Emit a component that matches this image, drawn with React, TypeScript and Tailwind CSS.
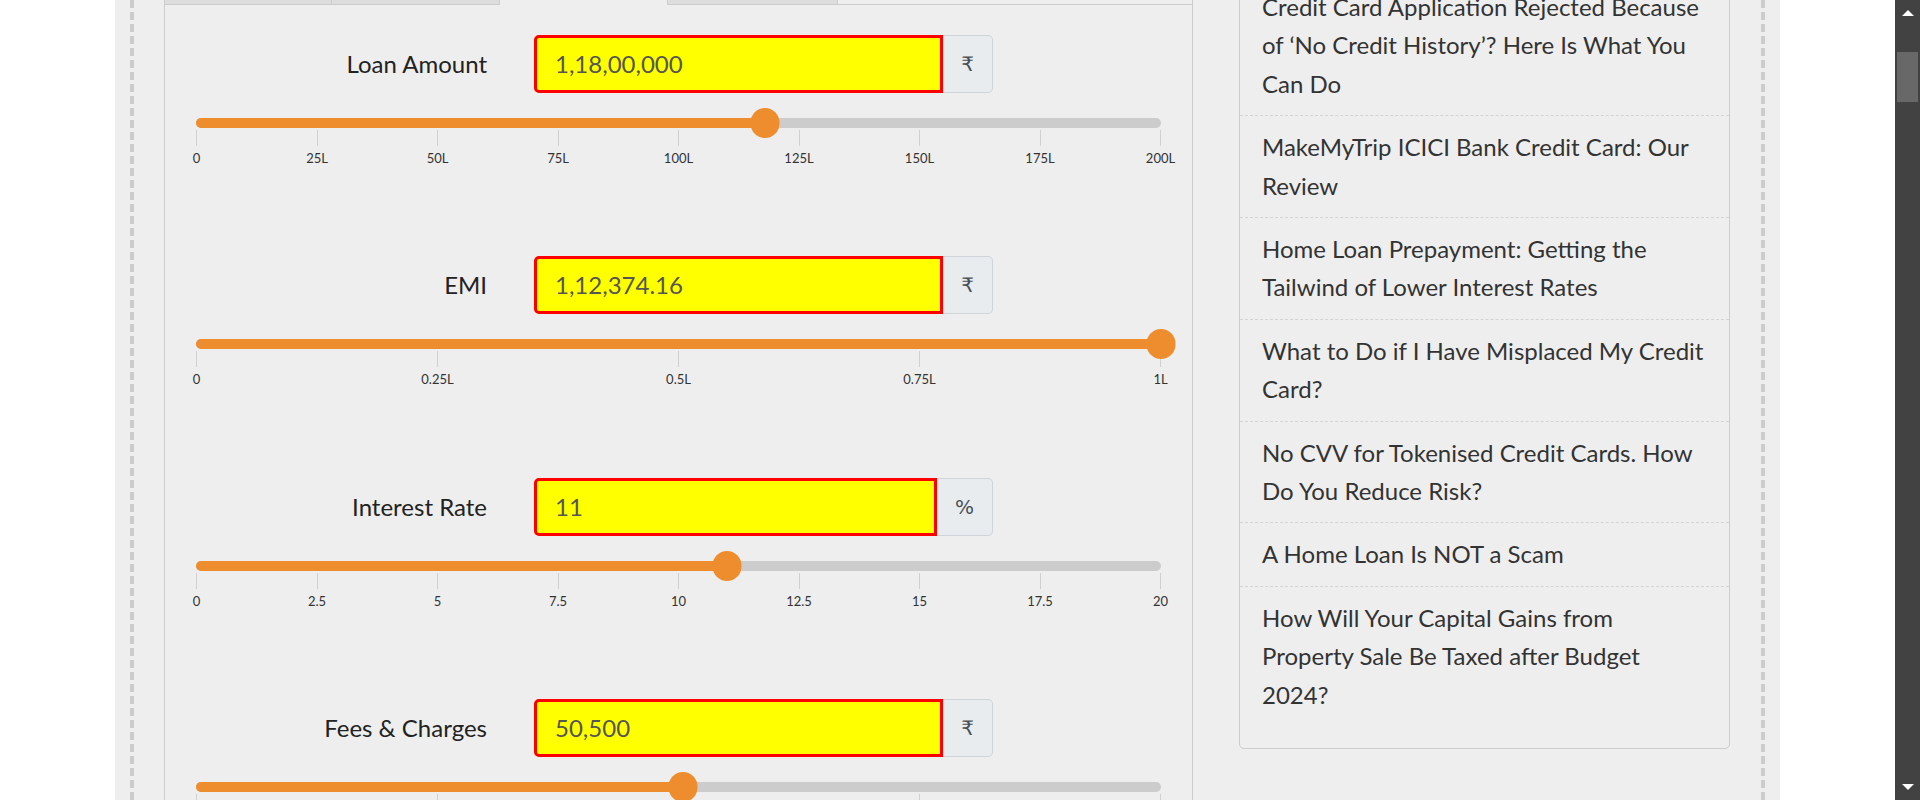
type Section = {
  label: string;
  value: string;
  unit: string;
  unitW: string;
  pct: number;
  ticks: string[];
  hideLabels?: boolean;
};

const sections: Section[] = [
  {
    label: "Loan Amount",
    value: "1,18,00,000",
    unit: "₹",
    unitW: "w-[50px]",
    pct: 59,
    ticks: ["0", "25L", "50L", "75L", "100L", "125L", "150L", "175L", "200L"],
  },
  {
    label: "EMI",
    value: "1,12,374.16",
    unit: "₹",
    unitW: "w-[50px]",
    pct: 100,
    ticks: ["0", "0.25L", "0.5L", "0.75L", "1L"],
  },
  {
    label: "Interest Rate",
    value: "11",
    unit: "%",
    unitW: "w-[56px]",
    pct: 55,
    ticks: ["0", "2.5", "5", "7.5", "10", "12.5", "15", "17.5", "20"],
  },
  {
    label: "Fees & Charges",
    value: "50,500",
    unit: "₹",
    unitW: "w-[50px]",
    pct: 50.5,
    ticks: ["0", "25K", "50K", "75K", "1L"],
    // labels fall below the fold
    hideLabels: true,
  },
];

const articles = [
  "Credit Card Application Rejected Because of ‘No Credit History’? Here Is What You Can Do",
  "MakeMyTrip ICICI Bank Credit Card: Our Review",
  "Home Loan Prepayment: Getting the Tailwind of Lower Interest Rates",
  "What to Do if I Have Misplaced My Credit Card?",
  "No CVV for Tokenised Credit Cards. How Do You Reduce Risk?",
  "A Home Loan Is NOT a Scam",
  "How Will Your Capital Gains from Property Sale Be Taxed after Budget 2024?",
];

function CalcSection({ s }: { s: Section }) {
  return (
    <div className="h-[221.3px]">
      <div className="flex h-[58px] items-center">
        <label className="w-[291px] text-right text-[24px] text-[#222]">{s.label}</label>
        <div className="ml-[47px] flex h-[58px] w-[459px]">
          <div className="flex flex-1 items-center rounded-l-[5px] border-[3px] border-[#ff0000] bg-[#ffff00] px-[18px] text-[24px] text-[#555]">
            {s.value}
          </div>
          <div
            className={
              "flex items-center justify-center rounded-r-[5px] border border-l-0 border-[#ced4da] bg-[#e9ecef] text-[22px] text-[#495057] " +
              s.unitW
            }
          >
            <span className="font-['DejaVu_Sans','Noto_Sans',sans-serif] text-[20px]">{s.unit}</span>
          </div>
        </div>
      </div>

      <div className="relative mt-[25px] h-[10px] rounded-full bg-[#cccccc]">
        <div className="h-full rounded-full bg-[#ee8d2d]" style={{ width: s.pct + "%" }} />
        <div
          className="absolute top-1/2 h-[30px] w-[29px] -translate-x-1/2 -translate-y-1/2 rounded-full bg-[#ee8d2d]"
          style={{ left: s.pct + "%" }}
        />
      </div>

      <div className="mt-[2px] flex justify-between">
        {s.ticks.map((t) => (
          <div key={t} className="flex w-px flex-col items-center">
            <div className="h-[16px] w-px bg-[#d0d0d0]" />
            {!s.hideLabels && (
              <span className="mt-[4px] whitespace-nowrap text-[13px] leading-[16px] text-[#333]">{t}</span>
            )}
          </div>
        ))}
      </div>
    </div>
  );
}

function Scrollbar() {
  return (
    <div className="flex w-[25px] shrink-0 flex-col items-center bg-[#424242]">
      <div className="mt-[10px] h-0 w-0 border-x-[6px] border-b-[6px] border-x-transparent border-b-white" />
      <div className="mt-[36px] h-[50px] w-[21px] bg-[#686868]" />
      <div className="flex-1" />
      <div className="mb-[10px] h-0 w-0 border-x-[6px] border-t-[6px] border-x-transparent border-t-white" />
    </div>
  );
}

export default function App() {
  return (
    <div className="flex h-[800px] overflow-hidden bg-white font-['Lato','Open_Sans',sans-serif]">
      <div className="flex flex-1 justify-center">
        <div className="w-[1665px] bg-[#eeeeee] px-[15px]">
          <div className="flex h-full border-x-4 border-dashed border-[#cccccc] pl-[30px]">
            <div className="w-[1029px] shrink-0">
              <div className="flex h-[5px]">
                <div className="w-[168px] border-x border-b border-[#cccccc] bg-[#dddddd]" />
                <div className="w-[168px] border-r border-b border-[#cccccc] bg-[#dddddd]" />
                <div className="w-[168px] border-r border-[#cccccc]" />
                <div className="w-[170px] border-r border-b border-[#cccccc] bg-[#dddddd]" />
                <div className="flex-1 border-r border-b border-[#cccccc]" />
              </div>
              <div className="h-[900px] border-x border-[#cccccc] px-[31px] pt-[30px]">
                {sections.map((s) => (
                  <CalcSection key={s.label} s={s} />
                ))}
              </div>
            </div>

            <div className="ml-[46px] w-[491px] shrink-0">
              <ul className="-mt-[25px] rounded-[5px] border border-[#cccccc] pb-[22px]">
                {articles.map((a, i) => (
                  <li
                    key={a}
                    className={
                      "px-[22px] py-[12px] text-[24px] leading-[38.4px] text-[#333] " +
                      (i < articles.length - 1 ? "border-b border-dashed border-[#d4d4d4]" : "")
                    }
                  >
                    {a}
                  </li>
                ))}
              </ul>
            </div>
          </div>
        </div>
      </div>
      <Scrollbar />
    </div>
  );
}
